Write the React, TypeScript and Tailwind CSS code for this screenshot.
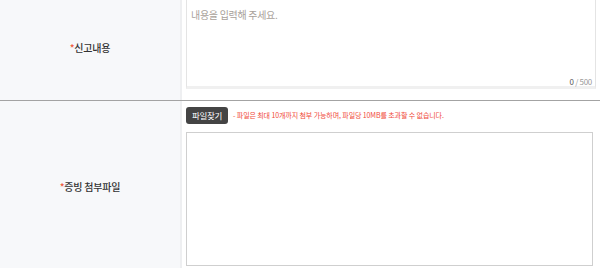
import { useState } from "react";

const font = { fontFamily: '"Noto Sans CJK KR", "Noto Sans", sans-serif' };

export default function App() {
  const [content, setContent] = useState("");

  return (
    <div className="h-[268px] w-[600px] overflow-hidden bg-white" style={font}>
      <div className="-mt-[6px]">
        {/* 신고내용 */}
        <div className="flex h-[107px] border-b border-[#a3a3a3]">
          <div className="flex w-[182px] shrink-0 items-center justify-center border-r-2 border-[#eeeff1] bg-[#f7f8fa] text-[10px] font-medium tracking-[-0.2px] text-[#333]">
            <span className="text-[#f05a3c]">*</span>신고내용
          </div>
          <div className="flex-1 pl-[4px] pr-[4px] pt-[4px]">
            <div className="relative h-[91px] border border-b-[3px] border-[#e4e4e4] border-b-[#f0f0f0]">
              <textarea
                value={content}
                onChange={(e) => setContent(e.target.value)}
                placeholder="내용을 입력해 주세요."
                className="h-full w-full resize-none px-[4px] py-[8px] text-[10px] tracking-[-0.3px] text-[#333] outline-none placeholder:text-[#a8a19a]"
              />
              <span className="absolute bottom-[-2px] right-[3px] text-[8px] tracking-[-0.3px] text-[#9a9a9a]">
                <span className="text-[#555]">{content.length}</span> / 500
              </span>
            </div>
          </div>
        </div>

        {/* 증빙 첨부파일 */}
        <div className="flex h-[170px]">
          <div className="flex w-[182px] shrink-0 items-center justify-center border-r-2 border-[#eeeff1] bg-[#f7f8fa] text-[10px] font-medium tracking-[-0.2px] text-[#333]">
            <span className="text-[#f05a3c]">*</span>증빙 첨부파일
          </div>
          <div className="flex-1 pl-[4px] pr-[4px] pt-[6px]">
            <div className="flex items-center gap-[5px]">
              <button className="h-[17px] w-[42px] rounded-[3px] bg-[#444] text-[8.5px] tracking-[-0.3px] text-white">
                파일찾기
              </button>
              <span className="text-[7px] tracking-[-0.1px] text-[#f04a3a]">
                - 파일은 최대 10개까지 첨부 가능하며, 파일당 10MB를 초과할 수 없습니다.
              </span>
            </div>
            <div className="mt-[8px] h-[134px] w-[407px] border border-[#cfcfcf]" />
          </div>
        </div>
      </div>
    </div>
  );
}
